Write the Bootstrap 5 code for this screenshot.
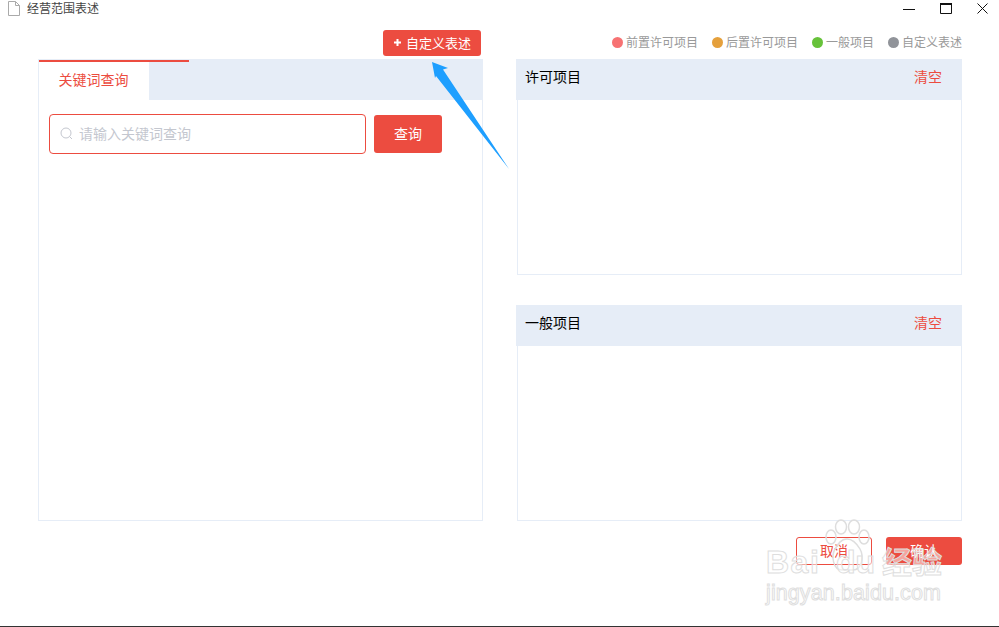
<!DOCTYPE html>
<html>
<head>
    <title>经营范围表述</title>
    <link href="https://cdn.jsdelivr.net/npm/bootstrap@5.3.3/dist/css/bootstrap.min.css" rel="stylesheet">
    <style>
        html, body { height: 100%; overflow: hidden; }
        body {
            position: relative;
            font-family: "Noto Sans CJK SC", "Liberation Sans", sans-serif;
            font-size: 14px;
            color: #000;
            background: #fff;
            border-bottom: 1px solid #333;
        }
        .title-bar { height: 16px; padding-left: 8px; font-size: 12px; color: #444; }
        .title-text { margin-left: 7px; line-height: 16px; }
        .win-btns { width: 85px; margin-right: 11px; }
        .tool-row { padding: 14px 37px 3px 38px; gap: 34px; }
        .tool-col { width: 445px; height: 26px; }
        .legend-col { padding-bottom: 2px; }
        .btn-custom {
            width: 98px; height: 26px; margin-right: 2px; padding: 0 0 1px;
            background: #ec4c40; color: #fff; border: 0; border-radius: 3px; font-size: 13px;
        }
        .legend-item { font-size: 12px; color: #999; margin-left: 14px; line-height: 1; }
        .legend-dot { width: 11px; height: 11px; border-radius: 50%; margin-right: 3px; }
        .main-row { padding: 0 37px 0 38px; gap: 34px; }
        .left-panel { width: 445px; height: 462px; border: 1px solid #e6edf7; border-top: 0; }
        .tab-head { height: 41px; background: #e6edf7; margin: 0 -1px; padding-left: 1px; position: relative; }
        .tab-head::before {
            content: ""; position: absolute; left: 1px; top: 1px;
            width: 150px; height: 2px; background: #ec4c40;
        }
        .tab-active { width: 110px; margin-top: 1px; padding: 0 1px 2px 0; background: #fff; color: #ec4c40; }
        .search-row { padding: 14px 10px; gap: 8px; }
        .search-box {
            width: 317px; height: 40px; padding: 0 0 2px 10px;
            border: 1px solid #ec4c40; border-radius: 4px; gap: 6px;
        }
        .search-input { border: 0; outline: 0; padding: 0; flex: 1; font-size: 14px; min-width: 0; }
        .search-input::placeholder { color: #c4c7cf; }
        .btn-search { width: 68px; height: 38px; padding: 0 0 2px; margin-top: 1px; background: #ec4c40; color: #fff; border: 0; border-radius: 3px; font-size: 14px; }
        .right-col { width: 445px; gap: 30px; }
        .side-panel { height: 216px; border: 1px solid #e6edf7; border-top: 0; }
        .side-head { height: 41px; margin: 0 -1px 0 -2px; padding: 0 20px 7px 9px; background: #e6edf7; }
        .clear-link { color: #ec4c40; }
        .foot-row { padding: 16px 37px 0 0; gap: 14px; }
        .btn-cancel, .btn-ok { width: 76px; height: 28px; padding: 0 0 2px; font-size: 14px; border-radius: 3px; }
        .btn-cancel { background: #fff; border: 1px solid #ec4c40; color: #ec4c40; }
        .btn-ok { background: #ec4c40; border: 0; color: #fff; }
        .arrow-over { position: absolute; left: 425px; top: 55px; pointer-events: none; }
        .mark-over { position: absolute; left: 766px; top: 518px; width: 190px; height: 92px; pointer-events: none; }
        .mark-big, .mark-cn, .mark-url {
            position: absolute; color: rgba(255,255,255,.5); -webkit-text-stroke: 1px #dedede;
            font-family: "Liberation Sans", "Noto Sans CJK SC", sans-serif; font-weight: 700; line-height: 1;
        }
        .mark-big { top: 28px; font-size: 32px; }
        .mark-bai { left: 0; letter-spacing: 1.500px; }
        .mark-du { left: 70px; }
        .mark-cn { left: 116px; top: 27px; font-size: 30px; font-family: "Noto Sans CJK SC", sans-serif; }
        .mark-url { left: 0; top: 65px; font-size: 21.500px; font-weight: 400; letter-spacing: .1px; }
        .mark-paw { position: absolute; left: 56px; top: 1px; }
    </style>
</head>
<body>
    <div class="title-bar d-flex align-items-center">
        <svg width="12" height="15" viewBox="0 0 12 15"><path d="M.5.5h7l4 4v10H.5zM7.500.5v4h4" fill="#fff" stroke="#aaa"/></svg>
        <span class="title-text flex-grow-1">经营范围表述</span>
        <div class="win-btns d-flex justify-content-between align-items-center">
            <svg width="12" height="12" viewBox="0 0 12 12"><path d="M0 7.500h12" stroke="#111"/></svg>
            <svg width="12" height="11" viewBox="0 0 12 11"><path d="M.5 1.500h11v9H.5z" fill="none" stroke="#111"/><path d="M0 1h12" stroke="#111" stroke-width="2"/></svg>
            <svg width="11" height="11" viewBox="0 0 11 11"><path d="M.5.5l10 10M10.500.5l-10 10" stroke="#111"/></svg>
        </div>
    </div>

    <div class="tool-row d-flex">
        <div class="tool-col d-flex justify-content-end">
            <button class="btn-custom d-flex align-items-center justify-content-center" type="button">
                <svg class="me-1" width="9" height="9" viewBox="0 0 9 9"><path d="M4.500 1v7M1 4.500h7" stroke="#fff" stroke-width="2"/></svg>自定义表述
            </button>
        </div>
        <div class="tool-col legend-col d-flex justify-content-end align-items-center">
            <span class="legend-item d-flex align-items-center"><i class="legend-dot" style="background:#f77273"></i>前置许可项目</span>
            <span class="legend-item d-flex align-items-center"><i class="legend-dot" style="background:#e5a03c"></i>后置许可项目</span>
            <span class="legend-item d-flex align-items-center"><i class="legend-dot" style="background:#67c23a"></i>一般项目</span>
            <span class="legend-item d-flex align-items-center"><i class="legend-dot" style="background:#909399"></i>自定义表述</span>
        </div>
    </div>

    <div class="main-row d-flex">
        <div class="left-panel">
            <div class="tab-head d-flex">
                <div class="tab-active d-flex align-items-center justify-content-center">关键词查询</div>
            </div>
            <div class="search-row d-flex">
                <div class="search-box d-flex align-items-center">
                    <svg width="13" height="13" viewBox="0 0 13 13"><circle cx="6" cy="6" r="5" fill="none" stroke="#c4c7cf"/><path d="M9.500 9.500l2.500 2.500" stroke="#c4c7cf"/></svg>
                    <input class="search-input" type="text" placeholder="请输入关键词查询">
                </div>
                <button class="btn-search" type="button">查询</button>
            </div>
        </div>
        <div class="right-col d-flex flex-column">
            <div class="side-panel">
                <div class="side-head d-flex justify-content-between align-items-center"><span>许可项目</span><span class="clear-link">清空</span></div>
            </div>
            <div class="side-panel">
                <div class="side-head d-flex justify-content-between align-items-center"><span>一般项目</span><span class="clear-link">清空</span></div>
            </div>
        </div>
    </div>

    <div class="foot-row d-flex justify-content-end">
        <button class="btn-cancel" type="button">取消</button>
        <button class="btn-ok" type="button">确认</button>
    </div>

    <svg class="arrow-over" width="90" height="115" viewBox="0 0 90 115"><path d="M7 7L23 13 18 14.500 84 114 11 21 10 23z" fill="#1e9fff"/></svg>

    <div class="mark-over">
        <svg class="mark-paw" width="50" height="54" viewBox="0 0 50 54" fill="none" stroke="#dedede" stroke-width="1.500">
            <ellipse cx="9" cy="18" rx="5" ry="7"/><ellipse cx="19" cy="8" rx="5.500" ry="7"/><ellipse cx="32" cy="8" rx="5.500" ry="7"/><ellipse cx="42" cy="18" rx="5" ry="7"/>
            <path d="M25 20c-6 0-9 5-12 10-4 7-2 21 7 21h11c9 0 11-14 7-21-3-5-7-10-13-10z"/>
        </svg>
        <span class="mark-big mark-bai">Bai</span>
        <span class="mark-big mark-du">du</span>
        <span class="mark-cn">经验</span>
        <span class="mark-url">jingyan.baidu.com</span>
    </div>
</body>
</html>
